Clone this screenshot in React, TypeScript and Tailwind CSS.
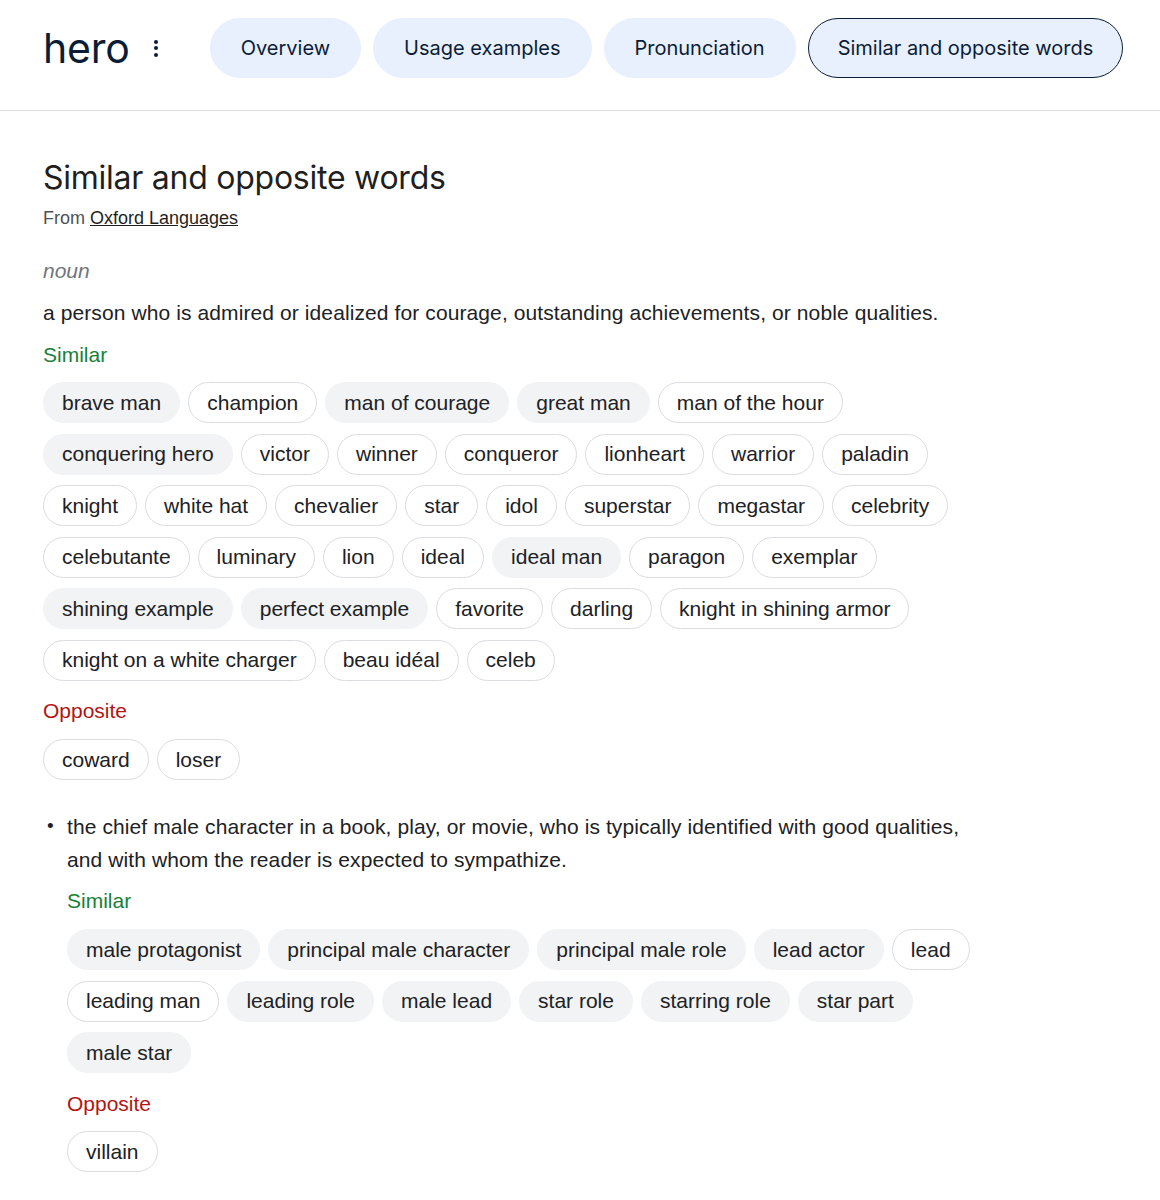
import React from 'react';

type Chip = { label: string; filled?: boolean };

const f = (label: string): Chip => ({ label, filled: true });
const o = (label: string): Chip => ({ label });

const heroSimilar: Chip[] = [
  f('brave man'), o('champion'), f('man of courage'), f('great man'), o('man of the hour'),
  f('conquering hero'), o('victor'), o('winner'), o('conqueror'), o('lionheart'), o('warrior'), o('paladin'),
  o('knight'), o('white hat'), o('chevalier'), o('star'), o('idol'), o('superstar'), o('megastar'), o('celebrity'),
  o('celebutante'), o('luminary'), o('lion'), o('ideal'), f('ideal man'), o('paragon'), o('exemplar'),
  f('shining example'), f('perfect example'), o('favorite'), o('darling'), o('knight in shining armor'),
  o('knight on a white charger'), o('beau idéal'), o('celeb'),
];

const heroOpposite: Chip[] = [o('coward'), o('loser')];

const leadSimilar: Chip[] = [
  f('male protagonist'), f('principal male character'), f('principal male role'), f('lead actor'), o('lead'),
  o('leading man'), f('leading role'), f('male lead'), f('star role'), f('starring role'), f('star part'),
  f('male star'),
];

const leadOpposite: Chip[] = [o('villain')];

const tabs = ['Overview', 'Usage examples', 'Pronunciation', 'Similar and opposite words'];

function ChipList({ chips }: { chips: Chip[] }) {
  return (
    <div className="flex flex-wrap gap-x-2 gap-y-[10.5px]">
      {chips.map((c) => (
        <span
          key={c.label}
          className={
            c.filled
              ? 'h-[41px] px-[18px] flex items-center rounded-full border border-[#f1f3f4] bg-[#f1f3f4] text-[21px] text-[#202124]'
              : 'h-[41px] px-[18px] flex items-center rounded-full border border-[#dadce0] bg-white text-[21px] text-[#202124]'
          }
        >
          {c.label}
        </span>
      ))}
    </div>
  );
}

function Label({ kind }: { kind: 'similar' | 'opposite' }) {
  return kind === 'similar' ? (
    <div className="text-[21px] leading-[28px] text-[#188038]">Similar</div>
  ) : (
    <div className="text-[21px] leading-[28px] text-[#b31412]">Opposite</div>
  );
}

export default function App() {
  return (
    <div className="min-h-screen bg-white font-['Liberation_Sans',Arial,sans-serif] text-[#202124]">
      {/* Top header with word and tabs */}
      <header className="h-[111px] border-b border-[#dadce0] flex items-center pl-[43px] pb-[14px]">
        <div className="font-['Inter',sans-serif] text-[41px] leading-none text-[#0b1d36] tracking-[-0.2px]">hero</div>
        <div className="ml-[24px] mr-[52px] flex flex-col gap-[2.5px] items-center">
          <span className="w-[4px] h-[4px] rounded-full bg-[#0b1d36]" />
          <span className="w-[4px] h-[4px] rounded-full bg-[#0b1d36]" />
          <span className="w-[4px] h-[4px] rounded-full bg-[#0b1d36]" />
        </div>
        <nav className="flex gap-[12px]">
          {tabs.map((t, i) => (
            <div
              key={t}
              className={
                i === 3
                  ? 'h-[60px] px-[29px] flex items-center rounded-full border border-[#0b1d36] bg-[#e8effd] font-[Inter,sans-serif] text-[20px] text-[#0b1d36]'
                  : 'h-[60px] px-[30px] flex items-center rounded-full border border-[#e8effd] bg-[#e8effd] font-[Inter,sans-serif] text-[20px] text-[#0b1d36]'
              }
            >
              {t}
            </div>
          ))}
        </nav>
      </header>

      <main className="w-[985px] pl-[43px] pt-[47px] pb-10">
        <h1 className="font-['Inter',sans-serif] text-[32px] leading-[40px] text-[#1f1f1f] tracking-[-0.25px]">
          Similar and opposite words
        </h1>
        <div className="mt-2 text-[18px] leading-[24px] text-[#4d5156]">
          From <span className="underline text-[#1f1f1f]">Oxford Languages</span>
        </div>

        <div className="mt-[27px] italic text-[21px] leading-[28px] text-[#70757a]">noun</div>
        <p className="mt-[14px] text-[21px] leading-[28px] tracking-[0.1px]">
          a person who is admired or idealized for courage, outstanding achievements, or noble qualities.
        </p>
        <div className="mt-[14px]">
          <Label kind="similar" />
        </div>
        <div className="mt-[13px]">
          <ChipList chips={heroSimilar} />
        </div>
        <div className="mt-[16.5px]">
          <Label kind="opposite" />
        </div>
        <div className="mt-[14px]">
          <ChipList chips={heroOpposite} />
        </div>

        {/* Second sense */}
        <div className="mt-[30px] relative pl-[24px]">
          <span className="absolute left-[4px] top-[-1px] text-[19px] leading-[33px]">•</span>
          <p className="text-[21px] leading-[33px] tracking-[0.1px]">
            the chief male character in a book, play, or movie, who is typically identified with good qualities,
            and with whom the reader is expected to sympathize.
          </p>
          <div className="mt-[11px]">
            <Label kind="similar" />
          </div>
          <div className="mt-[14px]">
            <ChipList chips={leadSimilar} />
          </div>
          <div className="mt-[17px]">
            <Label kind="opposite" />
          </div>
          <div className="mt-[13px]">
            <ChipList chips={leadOpposite} />
          </div>
        </div>
      </main>
    </div>
  );
}
